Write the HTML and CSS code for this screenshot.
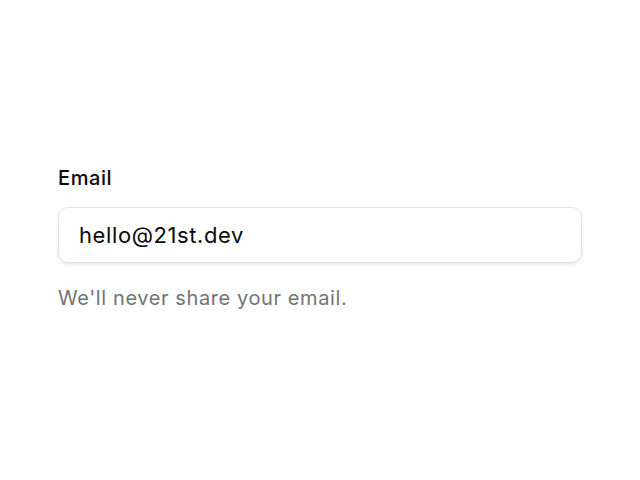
FILE: index.html
```html
<!DOCTYPE html>
<html>
<head>
<meta charset="utf-8">
<link rel="stylesheet" href="styles.css">
</head>
<body>
<main class="page">
  <div class="field">
    <label class="label" for="email">Email</label>
    <div class="input" id="email">hello@21st.dev</div>
    <p class="help">We'll never share your email.</p>
  </div>
</main>
</body>
</html>
```

FILE: styles.css
```css
html, body {
  margin: 0;
  padding: 0;
  background: #ffffff;
}
.page {
  width: 640px;
  height: 480px;
  box-sizing: border-box;
  padding-top: 164px;
  display: flex;
  justify-content: center;
  align-items: flex-start;
  font-family: Inter, "Liberation Sans", sans-serif;
  letter-spacing: 0.6px;
}
.field {
  width: 524px;
  display: flex;
  flex-direction: column;
}
.label {
  font-size: 20px;
  font-weight: 500;
  color: #0a0a0a;
  line-height: 28px;
  margin-bottom: 15px;
}
.input {
  box-sizing: border-box;
  height: 56px;
  border: 1px solid #e2e2e2;
  border-radius: 10px;
  padding: 0 20px;
  display: flex;
  align-items: center;
  font-size: 22px;
  color: #0a0a0a;
  box-shadow: 0 2px 4px rgba(0,0,0,0.09);
}
.help {
  margin: 21px 0 0;
  font-size: 20px;
  line-height: 28px;
  color: #737373;
}
```
